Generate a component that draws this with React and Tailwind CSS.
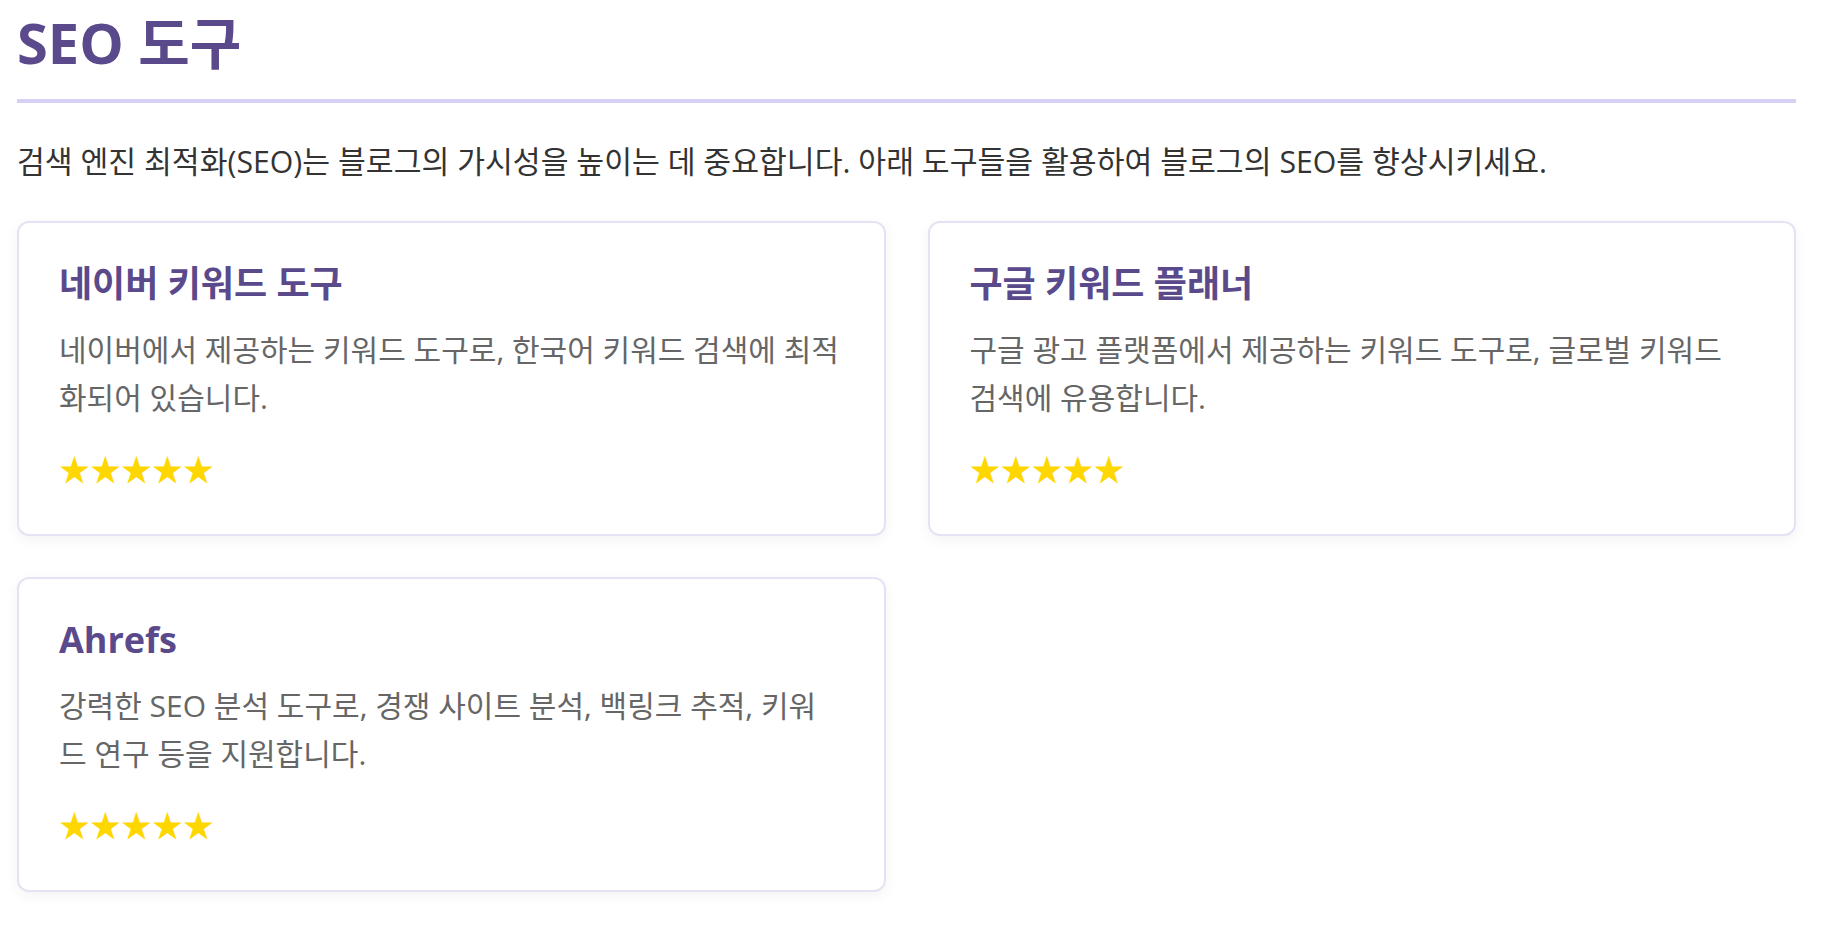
const tools = [
  {
    name: '네이버 키워드 도구',
    desc: '네이버에서 제공하는 키워드 도구로, 한국어 키워드 검색에 최적화되어 있습니다.',
    rating: 5,
  },
  {
    name: '구글 키워드 플래너',
    desc: '구글 광고 플랫폼에서 제공하는 키워드 도구로, 글로벌 키워드 검색에 유용합니다.',
    rating: 5,
  },
  {
    name: 'Ahrefs',
    desc: '강력한 SEO 분석 도구로, 경쟁 사이트 분석, 백링크 추적, 키워드 연구 등을 지원합니다.',
    rating: 5,
  },
];

function ToolCard({ tool }) {
  return (
    <div className="bg-white border-2 border-[#e6e2f5] rounded-[12px] px-[40px] pt-[40px] pb-[45px] shadow-[0_4px_14px_rgba(0,0,0,0.05)]">
      <h3 className="text-[36px] leading-[42px] font-bold text-[#5b4a8b]">{tool.name}</h3>
      <p className="mt-[21px] text-[30px] leading-[47.5px] text-[#666666]">{tool.desc}</p>
      <div className="mt-[26px] text-[31px] leading-[42px] text-[#ffd700] font-['Noto_Sans_CJK_KR',sans-serif]">
        {'★'.repeat(tool.rating)}
      </div>
    </div>
  );
}

export default function App() {
  return (
    <div className="min-h-screen bg-white pl-[17px] pr-[27px] pb-10 font-['Open_Sans','Noto_Sans_CJK_KR',sans-serif]">
      <h1 className="pt-[10px] pb-[24px] text-[56px] leading-[65px] font-bold text-[#5b4a8b] border-b-4 border-[#d8d0f4]">
        SEO 도구
      </h1>

      <p className="mt-[36px] text-[30.25px] leading-[45px] text-[#333333]">
        검색 엔진 최적화(SEO)는 블로그의 가시성을 높이는 데 중요합니다. 아래 도구들을 활용하여 블로그의 SEO를 향상시키세요.
      </p>

      {/* Tool cards */}
      <div className="mt-[37px] grid grid-cols-2 gap-x-[42px] gap-y-[41px]">
        {tools.map((t) => (
          <ToolCard key={t.name} tool={t} />
        ))}
      </div>
    </div>
  );
}
